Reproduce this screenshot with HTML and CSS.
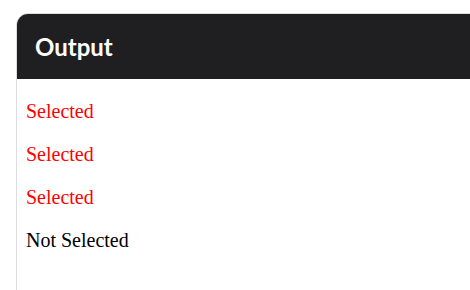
FILE: index.html
```html
<!DOCTYPE html>
<html>
<head>
<meta charset="utf-8">
<link rel="stylesheet" href="styles.css">
</head>
<body>
<div class="panel">
  <div class="panel-header"><h2 class="panel-title">Output</h2></div>
  <div class="panel-body">
    <p class="item selected">Selected</p>
    <p class="item selected">Selected</p>
    <p class="item selected">Selected</p>
    <p class="item">Not Selected</p>
  </div>
</div>
</body>
</html>
```
FILE: styles.css
```css
html, body {
  margin: 0;
  padding: 0;
  background: #ffffff;
  overflow: hidden;
}
.panel {
  margin: 13px 0 0 16px;
  width: 500px;
  height: 320px;
  border: 1px solid #dcdcdf;
  border-radius: 12px 12px 0 0;
  overflow: hidden;
  box-sizing: border-box;
}
.panel-header {
  background: #1f1e21;
  height: 65px;
  display: flex;
  align-items: center;
  padding-left: 18px;
}
.panel-title {
  margin: 0;
  color: #ffffff;
  font-family: Lato, "Open Sans", sans-serif;
  font-weight: 700;
  font-size: 24px;
}
.panel-body {
  padding: 1px 9px 0;
  display: flow-root;
}
.item {
  font-family: "Liberation Serif", "Times New Roman", serif;
  font-size: 20px;
  margin: 20px 0;
  color: #000000;
}
.item.selected {
  color: #ff0000;
}
```
